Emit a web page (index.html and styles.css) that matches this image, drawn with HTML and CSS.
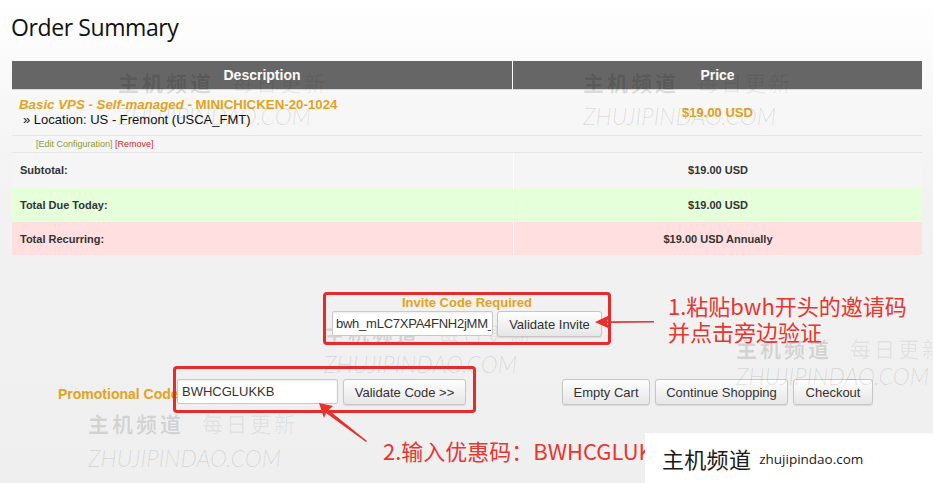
FILE: index.html
```html
<!DOCTYPE html>
<html lang="en">
<head>
<meta charset="utf-8">
<title>Order Summary</title>
<link rel="stylesheet" href="styles.css">
</head>
<body>
<div class="page">
  <h1 class="title">Order Summary</h1>

  <table class="cart">
    <thead>
      <tr><th class="c-desc">Description</th><th class="c-price">Price</th></tr>
    </thead>
    <tbody>
      <tr class="r-product">
        <td class="c-desc">
          <div class="pname"><em>Basic VPS - Self-managed</em> - MINICHICKEN-20-1024</div>
          <div class="ploc">» Location: US - Fremont (USCA_FMT)</div>
        </td>
        <td class="c-price pprice">$19.00 USD</td>
      </tr>
      <tr class="r-actions">
        <td colspan="2"><span class="edit">[Edit Configuration]</span> <span class="remove">[Remove]</span></td>
      </tr>
      <tr class="r-total r-sub"><td>Subtotal:</td><td class="c-price">$19.00 USD</td></tr>
      <tr class="r-total r-due"><td>Total Due Today:</td><td class="c-price">$19.00 USD</td></tr>
      <tr class="r-total r-rec"><td>Total Recurring:</td><td class="c-price">$19.00 USD Annually</td></tr>
    </tbody>
  </table>

  <div class="invite-wrap">
    <div class="invite-box">
      <div class="invite-label">Invite Code Required</div>
      <div class="invite-row">
        <input class="field field-invite" type="text" value="bwh_mLC7XPA4FNH2jMM_">
        <button class="btn btn-invite">Validate Invite</button>
      </div>
    </div>
  </div>

  <div class="promo-row">
    <label class="promo-label">Promotional Code</label>
    <div class="promo-box">
      <input class="field field-promo" type="text" value="BWHCGLUKKB">
      <button class="btn btn-promo">Validate Code &gt;&gt;</button>
    </div>
    <div class="actions">
      <button class="btn btn-empty">Empty Cart</button>
      <button class="btn btn-continue">Continue Shopping</button>
      <button class="btn btn-checkout">Checkout</button>
    </div>
  </div>

  <!-- watermarks -->
  <div class="wm wm-cn wm-a">主机频道<span class="light">每日更新</span></div>
  <div class="wm wm-en wm-a2">ZHUJIPINDAO.COM</div>
  <div class="wm wm-cn wm-b">主机频道<span class="light">每日更新</span></div>
  <div class="wm wm-en wm-b2">ZHUJIPINDAO.COM</div>
  <div class="wm wm-cn wm-c wm-under">主机频道<span class="light">每日更新</span></div>
  <div class="wm wm-en wm-c2 wm-under">ZHUJIPINDAO.COM</div>
  <div class="wm wm-cn wm-d">主机频道<span class="light">每日更新</span></div>
  <div class="wm wm-en wm-d2">ZHUJIPINDAO.COM</div>
  <div class="wm wm-cn wm-e">主机频道<span class="light">每日更新</span></div>
  <div class="wm wm-en wm-e2">ZHUJIPINDAO.COM</div>

  <!-- annotations -->
  <svg class="arrow arrow-1" width="70" height="20" viewBox="0 0 70 20">
    <polygon points="1,8 16,1 13,7.2 60,7 60,8.6 13,9 16,15" fill="#e8302c"/>
  </svg>
  <div class="note note-1">1.粘贴bwh开头的邀请码<br>并点击旁边验证</div>

  <svg class="arrow arrow-2" width="60" height="50" viewBox="0 0 60 50">
    <polygon points="2,2 16,5 11.5,9 50,40 49,41 9,12 7,17" fill="#e8302c"/>
  </svg>
  <div class="note note-2">2.输入优惠码：BWHCGLUKKB</div>

  <div class="badge"><span class="badge-cn">主机频道</span><span class="badge-en">zhujipindao.com</span></div>
</div>
</body>
</html>
```

FILE: styles.css
```css
* { box-sizing: border-box; }

html, body {
  margin: 0;
  padding: 0;
}

body {
  width: 933px;
  height: 483px;
  overflow: hidden;
  background: linear-gradient(180deg, #ffffff 0, #f8f8f8 90px, #f2f2f2 200px, #efefef 100%);
  font-family: "Liberation Sans", Arial, sans-serif;
  color: #333;
}

.page {
  position: relative;
  height: 483px;
  padding: 12px 11px 0 12px;
}

.title {
  margin: 0 0 19px -1px;
  font-family: "Open Sans", "Liberation Sans", sans-serif;
  font-weight: 400;
  font-size: 23px;
  line-height: 30px;
  letter-spacing: -0.4px;
  color: #111;
}

/* ---------- table ---------- */
.cart {
  width: 910px;
  border-collapse: separate;
  border-spacing: 0;
  table-layout: fixed;
  font-size: 11px;
}

.cart th {
  height: 29px;
  padding: 0;
  background: #666;
  color: #fff;
  font-size: 14px;
  font-weight: bold;
  text-align: center;
  border-bottom: 1px solid #d6d6d6;
}

.cart th.c-desc {
  width: 501px;
  border-right: 1px solid #fff;
}

.r-product td {
  padding: 7px 7px 8px;
  border-bottom: 1px solid #e6e6e6;
  vertical-align: middle;
}

.pname {
  font-size: 13.3px;
  line-height: 15px;
  font-weight: bold;
  color: #e2a321;
}

.ploc {
  padding-left: 4px;
  font-size: 13px;
  line-height: 15px;
  color: #111;
}

.pprice {
  text-align: center;
  font-size: 13px;
  font-weight: bold;
  color: #e2a321;
}

.r-actions td {
  height: 17px;
  padding: 0 0 0 24px;
  font-size: 9px;
  line-height: 16px;
  border-bottom: 1px solid #e6e6e6;
}

.edit { color: #8c9a34; }
.remove { color: #d0282c; }

.r-total td {
  height: 34px;
  padding: 0 8px;
  font-weight: bold;
  color: #333;
  vertical-align: middle;
}

.r-total td.c-price {
  text-align: center;
  border-left: 1px solid rgba(255, 255, 255, 0.7);
}

.r-sub td { background: #f5f5f5; }
.r-due td { background: #e5ffdb; border-top: 1px solid #f4f4f4; }
.r-rec td { background: #ffdfdf; border-top: 1px solid #f4f4f4; }

/* ---------- invite ---------- */
.invite-wrap {
  width: 910px;
  margin-top: 37px;
  display: flex;
  justify-content: center;
}

.invite-box {
  border: 3px solid #e52b2b;
  border-radius: 4px;
  padding: 0 6px 5px;
  display: flex;
  flex-direction: column;
  align-items: center;
}

.invite-label {
  font-size: 13px;
  font-weight: bold;
  line-height: 15px;
  color: #e2a321;
  margin-bottom: 1px;
}

.invite-row {
  display: flex;
  gap: 4px;
  align-items: flex-start;
}

.field {
  height: 25px;
  border: 1px solid #c9c9c9;
  border-radius: 2px;
  background: #fff;
  font: 13px "Liberation Sans", Arial, sans-serif;
  color: #333;
  padding: 0 4px;
  box-shadow: inset 0 1px 2px rgba(0, 0, 0, 0.08);
  outline: none;
}

.field-invite {
  width: 161px;
  padding: 0 1px 0 3px;
  letter-spacing: -0.25px;
}

.field-promo { width: 161px; }

.btn {
  height: 26px;
  border: 1px solid #c6c6c6;
  border-radius: 3px;
  background: linear-gradient(180deg, #fefefe 0, #f2f2f2 50%, #e6e6e6 100%);
  font: 13px "Liberation Sans", Arial, sans-serif;
  color: #333;
  padding: 0;
  box-shadow: 0 1px 1px rgba(0, 0, 0, 0.1);
  white-space: nowrap;
}

.btn-invite { width: 105px; }
.btn-promo { width: 123px; }
.btn-empty { width: 88px; }
.btn-continue { width: 133px; }
.btn-checkout { width: 80px; }

/* ---------- promo row ---------- */
.promo-row {
  display: flex;
  align-items: flex-start;
  margin-top: 21px;
  padding-left: 46px;
}

.promo-label {
  width: 115px;
  margin-top: 20px;
  font-size: 14px;
  font-weight: bold;
  line-height: 16px;
  color: #e2a321;
  white-space: nowrap;
}

.promo-box {
  border: 3px solid #e52b2b;
  border-radius: 4px;
  padding: 10px 7px 5px 1px;
  display: flex;
  gap: 5px;
  align-items: flex-start;
}

.actions {
  display: flex;
  gap: 5px;
  margin-left: 86px;
  margin-top: 13px;
}

/* ---------- watermarks ---------- */
.wm {
  position: absolute;
  pointer-events: none;
  white-space: nowrap;
}

.wm-under { z-index: -1; }

.wm-cn {
  font-family: "Noto Sans CJK SC", sans-serif;
  font-size: 21px;
  line-height: 24px;
  letter-spacing: 3px;
  font-weight: 700;
  color: rgba(0, 0, 0, 0.12);
}

.wm-cn .light {
  margin-left: 18px;
  font-weight: 400;
  color: rgba(0, 0, 0, 0.07);
}

.wm-en {
  font-family: Lato, "Open Sans", sans-serif;
  font-style: italic;
  font-weight: 300;
  font-size: 23px;
  line-height: 28px;
  letter-spacing: 0;
  color: rgba(0, 0, 0, 0.11);
}

.wm-a  { left: 118px; top: 70px; }
.wm-a2 { left: 118px; top: 102px; }
.wm-b  { left: 583px; top: 70px; }
.wm-b2 { left: 583px; top: 102px; }
.wm-c  { left: 324px; top: 321px; }
.wm-c2 { left: 324px; top: 350px; }
.wm-d  { left: 736px; top: 336px; }
.wm-d2 { left: 736px; top: 362px; }
.wm-e  { left: 88px;  top: 411px; }
.wm-e2 { left: 88px;  top: 444px; }

/* ---------- annotations ---------- */
.arrow {
  position: absolute;
}

.arrow-1 { left: 594px; top: 314px; }
.arrow-2 { left: 317px; top: 401px; }

.note {
  position: absolute;
  font-family: "Noto Sans CJK SC", sans-serif;
  font-size: 22px;
  line-height: 26px;
  color: #e8352f;
  white-space: nowrap;
}

.note-1 { left: 668px; top: 292px; }
.note-2 { left: 383px; top: 437px; }

.badge {
  position: absolute;
  left: 645px;
  top: 433px;
  width: 288px;
  height: 50px;
  background: #fff;
  display: flex;
  align-items: center;
  gap: 8px;
  padding: 0 0 0 17px;
}

.badge-cn {
  font-family: "Noto Sans CJK SC", sans-serif;
  font-size: 22px;
  color: #1a1a1a;
  letter-spacing: 0.3px;
}

.badge-en {
  font-family: "Open Sans", "Noto Sans", sans-serif;
  font-size: 13.5px;
  color: #1a1a1a;
  margin-top: 2px;
}
```
